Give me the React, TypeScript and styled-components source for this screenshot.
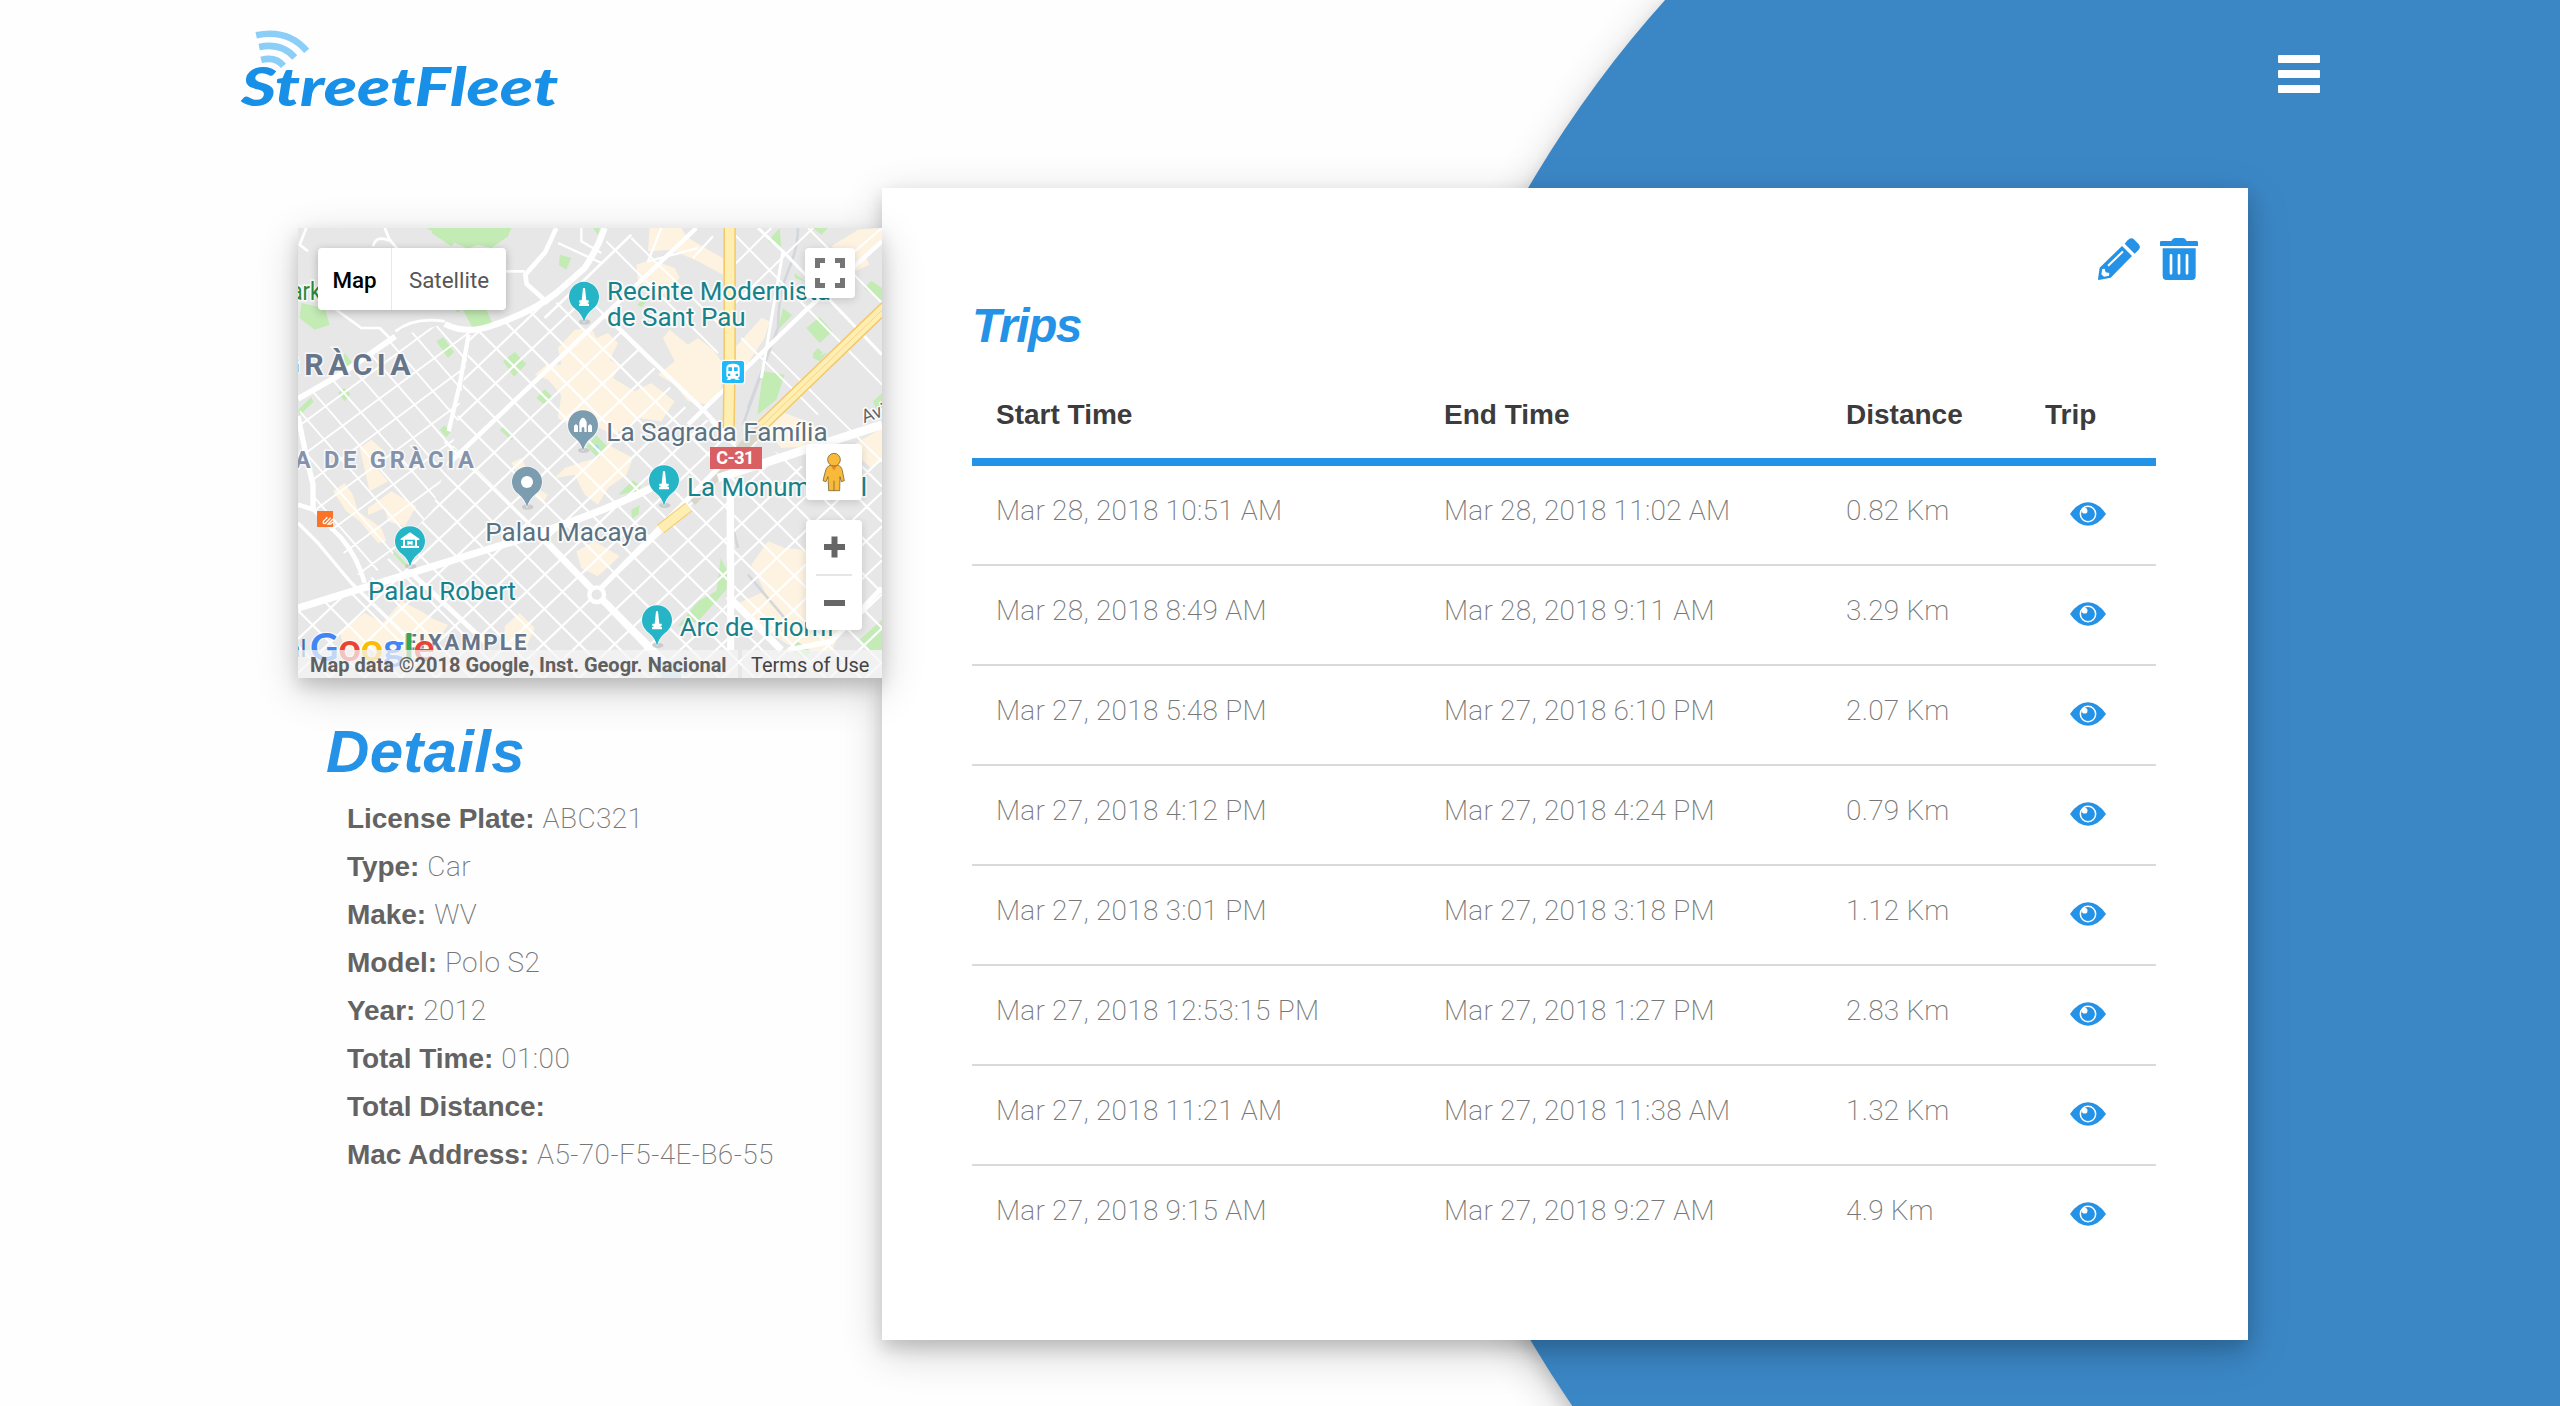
import React from 'react';
import styled, { createGlobalStyle } from 'styled-components';

const blue = '#2492e6';
const sans = '"Liberation Sans", Arial, sans-serif';
const thin = 'Roboto, "Liberation Sans", sans-serif';

const GlobalStyle = createGlobalStyle`
  * { box-sizing: border-box; }
  body { margin: 0; background: #fff; font-family: ${sans}; }
`;

const Page = styled.div`
  position: relative;
  height: 1406px;
  overflow: hidden;
  background: #fefefe;
`;

const Disc = styled.div`
  position: absolute;
  left: 1373px;
  top: -378px;
  width: 2280px;
  height: 2280px;
  border-radius: 50%;
  background: #3b87c6;
  box-shadow: 0 8px 16px rgba(0, 0, 0, 0.12), 0 12px 40px rgba(0, 0, 0, 0.19);
`;

const Header = styled.header`
  position: relative;
  display: flex;
  justify-content: space-between;
  align-items: flex-start;
  height: 188px;
  padding: 20px 240px 0 236px;
`;

const LogoArt = styled.svg`
  width: 330px;
  height: 93px;
`;

const MenuButton = styled.button`
  display: flex;
  flex-direction: column;
  gap: 7px;
  margin: 35px 0 0;
  padding: 0;
  border: 0;
  background: none;
`;

const MenuBar = styled.span`
  width: 42px;
  height: 8px;
  border-radius: 1px;
  background: #fff;
`;

const Main = styled.main`
  position: relative;
  display: flex;
  padding-left: 298px;
`;

const Side = styled.section`
  width: 584px;
  padding-top: 40px;
`;

const MapFrame = styled.div`
  position: relative;
  width: 584px;
  height: 450px;
  box-shadow: 0 8px 16px rgba(0, 0, 0, 0.15), 0 12px 40px rgba(0, 0, 0, 0.19);
`;

const MapArt = styled.svg`
  display: block;
  width: 584px;
  height: 450px;
`;

const MapOverlay = styled.div`
  position: absolute;
  inset: 0;
  display: flex;
  flex-direction: column;
  justify-content: space-between;
`;

const MapControls = styled.div`
  display: flex;
  justify-content: space-between;
  align-items: flex-start;
  padding: 20px 20px 0;
`;

const TypeSwitch = styled.div`
  display: flex;
  height: 62px;
  border-radius: 4px;
  background: #fff;
  box-shadow: 0 2px 8px rgba(0, 0, 0, 0.25);
`;

const TypeOption = styled.button<{ $active?: boolean }>`
  width: ${p => (p.$active ? 73 : 115)}px;
  padding: 2px 0 0;
  border: 0;
  border-left: ${p => (p.$active ? 'none' : '1px solid #e8e8e8')};
  background: none;
  font: ${p => (p.$active ? 500 : 400)} 22.400px Roboto, sans-serif;
  color: ${p => (p.$active ? '#000' : '#565656')};
`;

const ControlColumn = styled.div`
  display: flex;
  flex-direction: column;
  align-items: center;
`;

const ControlBox = styled.button<{ $w: number; $h: number; $top?: number; $left?: number }>`
  display: flex;
  align-items: center;
  justify-content: center;
  width: ${p => p.$w}px;
  height: ${p => p.$h}px;
  margin: ${p => p.$top || 0}px 0 0 ${p => p.$left || 0}px;
  padding: 0;
  border: 0;
  border-radius: 4px;
  background: #fff;
  box-shadow: 0 2px 8px rgba(0, 0, 0, 0.15);
`;

const Attribution = styled.div`
  display: flex;
  gap: 4px;
  height: 28px;
  font: 400 20px/30px Roboto, sans-serif;
  color: #444;
`;

const Credit = styled.span<{ $w: number; $bold?: boolean }>`
  width: ${p => p.$w}px;
  padding-left: ${p => (p.$bold ? 12 : 9)}px;
  background: rgba(245, 245, 245, 0.72);
  font-weight: ${p => (p.$bold ? 700 : 400)};
  color: ${p => (p.$bold ? '#606060' : '#444')};
  white-space: nowrap;
`;

const DetailsTitle = styled.h1`
  margin: 42px 0 0 28px;
  font: italic 700 60px/64px ${sans};
  letter-spacing: 0.3px;
  color: ${blue};
`;

const DetailList = styled.dl`
  margin: 11px 0 0 49px;
`;

const DetailRow = styled.div`
  display: flex;
  gap: 8px;
  height: 48px;
  font-size: 28px;
  line-height: 48px;
`;

const Label = styled.dt`
  font-weight: 700;
  letter-spacing: -0.05px;
  color: #636363;
`;

const Value = styled.dd`
  margin: 0;
  font-family: ${thin};
  font-weight: 200;
  letter-spacing: 0.4px;
  color: #777;
`;

const Card = styled.section`
  width: 1366px;
  height: 1152px;
  background: #fff;
  box-shadow: 0 8px 16px rgba(0, 0, 0, 0.15), 0 12px 40px rgba(0, 0, 0, 0.19);
`;

const Actions = styled.div`
  display: flex;
  justify-content: flex-end;
  gap: 20px;
  padding: 50px 50px 0 0;
`;

const CardTitle = styled.h2`
  margin: 18px 0 0 90px;
  font: italic 700 48px/56px ${sans};
  letter-spacing: -1.500px;
  color: ${blue};
`;

const Table = styled.div`
  width: 1184px;
  margin: 16px 0 0 90px;
`;

const Row = styled.div<{ $head?: boolean; $last?: boolean }>`
  display: grid;
  grid-template-columns: 448px 402px 199px 86px;
  padding-left: 24px;
  height: ${p => (p.$head ? 96 : 100)}px;
  border-bottom: ${p => (p.$head ? `8px solid ${blue}` : p.$last ? 'none' : '2px solid #dadada')};
`;

const HeadCell = styled.div`
  padding-top: 29px;
  font: 700 28px/32px ${sans};
  color: #3c3c3c;
`;

const Cell = styled.div`
  padding-top: 29px;
  font: 200 28px/32px ${thin};
  letter-spacing: 0.25px;
  color: #777;
`;

const EyeCell = styled.div`
  padding: 36px 0 0 25px;
`;

const Logo = () => (
  <LogoArt viewBox="108 60 990 280" aria-label="StreetFleet">
    <g fill="none" stroke="#8bcef8" strokeWidth="20">
      <path d="M167 106 Q262 86 319 153" />
      <path d="M176 141 Q244 128 283 173" />
      <path d="M182 180 Q226 169 249 198" />
    </g>
    <text x="121" y="320" fontFamily="Lato, sans-serif" fontWeight="900" fontStyle="italic" fontSize="163"
      textLength="955" lengthAdjust="spacingAndGlyphs" fill="#1890e8">StreetFleet</text>
  </LogoArt>
);

const Eye = () => (
  <svg width="36" height="24" viewBox="0 0 108 72">
    <path d="M0 36 Q24 1 54 1 Q84 1 108 36 Q84 71 54 71 Q24 71 0 36Z" fill={blue} />
    <circle cx="54" cy="36" r="23" fill="none" stroke="#fff" strokeWidth="4.500" />
    <circle cx="44" cy="26" r="8.500" fill="#fff" />
  </svg>
);

const Pencil = () => (
  <svg width="42" height="42" viewBox="0 0 126 126">
    <path d="M5 89 L72 24 L102 54 L38 119 L2 126 L0 124 Z" fill={blue} />
    <path d="M80 17 L89 7 Q99 -4 109 5 L121 17 Q130 27 122 35 L110 47 Z" fill={blue} />
    <path d="M32 82 L73 42" stroke="#fff" strokeWidth="6" strokeLinecap="round" />
    <path d="M13 93 L20 92 L23 103 L34 105 L33 113 L18 116 L10 109 Z" fill="#fff" />
  </svg>
);

const Trash = () => (
  <svg width="38" height="42" viewBox="0 0 114 126">
    <path d="M4 9 H34 Q38 0 45 0 H69 Q76 0 80 9 H110 Q114 9 114 13 V24 H0 V13 Q0 9 4 9Z" fill={blue} />
    <path d="M8 31 H107 V114 Q107 126 95 126 H20 Q8 126 8 114Z" fill={blue} />
    <path d="M33 52 V106 M57 52 V106 M81 52 V106" stroke="#fff" strokeWidth="8" strokeLinecap="round" />
  </svg>
);

/* Street map, drawn at three units per pixel. */
const range = (from: number, to: number, step: number) =>
  Array.from({ length: Math.ceil((to - from) / step) }, (_, i) => from + i * step);

const gridDown = range(-1720, 1400, 106.2).map(c => `M0 ${c}L1752 ${c + 1752}`).join('');
const gridUp = range(111, 3100, 102).map(c => `M0 ${c}L1752 ${c - 1664}`).join('');
const oldDown = range(-600, 1100, 104).map(c => `M0 ${c}L800 ${c + 920}`).join('');
const oldUp = range(500, 1800, 96).map(c => `M0 ${c}L800 ${c - 590}`).join('');

const parks = [
  '385,0 640,0 630,25 580,60 540,50 510,62 450,35', '410,0 470,45 460,55 400,15',
  '10,225 80,240 95,290 50,305 5,270', '495,246 565,246 585,290 525,302',
  '785,80 820,90 805,125 783,112', '415,340 435,328 468,372 450,390',
  '615,400 650,372 685,408 648,446', '715,510 740,483 765,508 740,530',
  '605,605 620,595 650,625 640,637', '120,495 138,480 158,497 140,520',
  '0,545 40,508 46,522 5,562', '425,605 440,592 458,612 445,627',
  '865,655 895,622 930,658 900,690', '960,800 1005,757 1030,775 1020,790',
  '1000,845 1025,832 1022,858 1002,872', '1410,40 1445,0 1450,62',
  '1395,430 1460,440 1435,515 1378,560', '1525,300 1565,267 1603,310 1565,345',
  '1455,240 1482,262 1440,305', '1698,180 1720,158 1752,180 1752,218',
  '1490,135 1520,160 1490,150', '1545,0 1590,0 1570,20', '1725,520 1752,495 1752,540 1735,545',
  '1545,375 1560,360 1575,375 1562,385 1590,372 1565,400 1545,390',
  '1140,1195 1200,1120 1255,1090 1268,990 1288,1030 1285,1085 1200,1180',
  '1465,1262 1495,1238 1540,1270 1520,1290', '1680,1240 1752,1175 1752,1266 1715,1266',
  '275,965 290,970 330,1012 318,1012', '105,890 128,918 118,925 100,900', '885,0 905,0 900,20',
  '468,215 492,240 480,255 462,235', '140,375 160,400 155,420 135,400', '1018,230 1035,212 1045,222 1030,238',
];

const zones = [
  '780,360 830,305 880,300 895,330 930,315 960,345 935,395 965,415 945,450 1010,490 1060,465 1130,520 1090,580 1020,570 950,620 880,590 830,600 780,570 790,500 750,455 710,440 745,410 790,410',
  '1095,330 1115,305 1170,350 1200,330 1245,365 1270,400 1270,480 1230,530 1170,520 1130,470 1080,440 1130,400',
  '1055,0 1150,0 1165,25 1220,60 1275,90 1275,140 1200,100 1120,65 1050,70',
  '1015,110 1060,95 1130,120 1145,150 1095,200 1020,160', '1310,360 1390,270 1415,280 1400,330 1340,420 1315,400',
  '860,700 900,690 930,650 1005,690 985,740 930,780 900,830 860,800 830,740 770,750 800,720',
  '105,790 140,765 165,800 180,850 250,900 265,940 240,945 185,880 145,850',
  '210,840 280,790 355,835 320,895 270,880 260,840 210,862', '185,660 220,635 265,675 220,700 270,760 215,790',
  '640,705 670,690 715,780 750,800 735,825 690,790', '835,970 890,940 965,985 900,1045 850,1020',
  '1360,1010 1410,940 1460,960 1560,970 1560,1150 1640,1180 1600,1270 1500,1270 1440,1230 1310,1130 1400,1090',
  '125,1210 200,1155 255,1185 310,1120 370,1150 410,1175 450,1190 400,1266 140,1266',
  '620,1195 665,1155 710,1200 680,1266 620,1266', '1600,55 1680,5 1752,0 1752,35 1700,80 1715,110 1670,130 1640,90',
  '1420,540 1540,585 1600,650 1450,660 1400,600', '1650,660 1752,600 1752,700 1720,720',
];

const arteries: [string, number][] = [
  ['M700 895L1120 1330', 20], ['M440 640L700 895', 8], ['M925 265L1225 555L1310 650', 13],
  ['M460 700L1195 0', 13], ['M890 1100L1290 690', 16], ['M1170 590L1520 250L1752 40', 13],
  ['M0 1140L680 930Q920 850 1060 780', 22], ['M1260 750L1752 590', 26],
  ['M1298 780V1266', 21], ['M1290 1105L1450 1266', 21], ['M1470 1266L1600 1240L1752 1080', 16],
  ['M775 0L742 72L682 140L686 168L750 225', 14], ['M440 288Q510 322 590 290Q710 248 775 195L860 120Q900 60 920 0', 19],
  ['M512 320L485 470L452 610', 13], ['M0 512L130 438L292 325', 17], ['M292 310Q350 265 440 280', 8],
  ['M0 565Q25 690 45 770L45 845', 16], ['M0 830L48 845L130 930Q180 990 200 1065', 14],
  ['M0 885L60 945L160 1065L330 1230', 10], ['M340 1035L560 1240', 15], ['M80 220L190 300H245L275 330', 8],
  ['M260 0L275 35L300 65M225 55Q235 20 275 38', 8], ['M25 0L5 50L30 70', 8], ['M620 130H680', 8],
  ['M850 0V40L910 75M780 45L910 105', 7], ['M1185 90L1245 25M1090 0L1050 100L1200 60', 7],
  ['M1380 0L1455 70L1390 450M1455 70L1752 380', 9], ['M1290 780V1000', 8], ['M740 270L1000 20', 8],
  ['M1310 20L1752 470M1530 0L1752 225M1330 330L1560 560M1312 225L1545 0M1310 110L1420 0M1600 130L1752 0M1420 370L1600 550L1752 700', 6],
  ['M925 40L1260 375M1000 30L1275 300', 6],
];

interface PinProps { x: number; y: number; color?: string; kind: 'tower' | 'dot' | 'church' | 'museum' }
const Pin = ({ x, y, color = '#25b5c6', kind }: PinProps) => (
  <g transform={`translate(${x} ${y})`}>
    <ellipse cx="2" cy="75" rx="17" ry="8" fill="#999" opacity=".35" />
    <path d="M0 76 Q-5 53 -25 37 A45 45 0 1 1 25 37 Q5 53 0 76Z" fill={color} stroke="#fff" strokeOpacity=".8" strokeWidth="4" paintOrder="stroke" />
    {kind === 'dot' && <circle r="18" fill="#fff" />}
    {kind === 'tower' && <path d="M-3 -27H3L7 10H14V17H9L15 21V27H-15V21L-9 17H-14V10H-7Z" fill="#fff" />}
    {kind === 'church' && <path d="M-27 20V2Q-21 -8 -15 2V20ZM-11 20V-10Q0 -36 11 -10V20H4V8Q0 2 -4 8V20ZM15 20V2Q21 -8 27 2V20Z" fill="#fff" />}
    {kind === 'museum' && <path d="M-28 -8L0 -27L28 -8V-4H21V14H27V20H-27V14H-21V-4H-28ZM-15 -5V13H15V-5ZM-8 -1H-3L0 2L3 -1H8V10H3L0 7L-3 10H-8Z" fill="#fff" fillRule="evenodd" />}
  </g>
);

interface PlaceProps { x: number; y: number; w: number; color?: string; children: string }
const Place = ({ x, y, w, color = '#5b7282', children }: PlaceProps) => (
  <text x={x - 3} y={y} textLength={w + 4} lengthAdjust="spacingAndGlyphs" fontSize="77" fill={color}
    stroke="#fff" strokeOpacity=".75" strokeWidth="11" strokeLinejoin="round" paintOrder="stroke">{children}</text>
);

const teal = '#17828b';

const StreetMap = () => (
  <MapArt viewBox="0 0 1752 1350">
    <defs>
      <clipPath id="new-town">
        <path d="M520 315L700 245L860 200L1000 330L1180 560L1300 600L1560 740L1752 690V1350H0V1140L200 1070L400 850L465 650Z" />
      </clipPath>
      <clipPath id="old-town">
        <path d="M0 515L300 325L440 288L520 315L465 650L400 850L200 1070L140 980L50 830Z" />
      </clipPath>
    </defs>
    <rect width="1752" height="1350" fill="#e7e7e7" />
    {zones.map(p => <polygon key={p} points={p} fill="#fdf3e0" />)}
    {parks.map(p => <polygon key={p} points={p} fill="#c3ebb4" />)}
    <circle cx="895" cy="658" r="8" fill="#a5d5f7" />
    <g fill="none" stroke="#d3d7db" strokeWidth="8">
      <path d="M1500 0Q1500 60 1470 130T1440 300L1350 540M1385 450L1335 590M1305 780V900L1320 960M1350 1040L1460 1170" />
    </g>
    <g fill="none" stroke="#fff" strokeWidth="6.500">
      <path d={gridDown + gridUp} clipPath="url(#new-town)" />
      <path d={oldDown + oldUp} clipPath="url(#old-town)" strokeWidth="5.500" />
    </g>
    <path d="M465 660L690 885" stroke="#c9e4bf" strokeWidth="4" />
    <path d="M1390 600L1180 820" stroke="#d9d5cb" strokeWidth="32" />
    <g fill="none" stroke="#fff" strokeLinejoin="round">
      {arteries.map(([d, w]) => <path key={d} d={d} strokeWidth={w} />)}
      <circle cx="896" cy="1100" r="22" strokeWidth="13" fill="#e7e7e7" />
    </g>
    <g fill="none">
      <path d="M1295 0V400L1292 600M1770 229L1390 595" stroke="#f4c96a" strokeWidth="37" />
      <path d="M1295 0V400L1292 600M1770 229L1390 595" stroke="#feeeb2" strokeWidth="28" />
      <path d="M1770 229L1390 595" stroke="#f4c96a" strokeWidth="2" />
      <path d="M1088 903L1172 837" stroke="#f4c96a" strokeWidth="33" />
      <path d="M1088 903L1172 837" stroke="#feeeb2" strokeWidth="27" />
    </g>
    <rect x="1090" y="1300" width="60" height="50" fill="#aadbe5" />

    <g fontFamily="Roboto, sans-serif">
      <Place x={-60} y={215} w={128} color="#2c8a3a">Park</Place>
      <g fontWeight="700" stroke="#fff" strokeOpacity=".7" strokeWidth="9" paintOrder="stroke">
        <text x="-56" y="440" textLength="394" fontSize="91" fill="#66758a">GRÀCIA</text>
        <text x="-10" y="720" textLength="538" fontSize="71" fill="#8493ab">A DE GRÀCIA</text>
        <text x="318" y="1267" textLength="368" fontSize="67" fill="#66758a">EIXAMPLE</text>
      </g>
      <Place x={930} y={216} w={668} color={teal}>Recinte Modernista</Place>
      <Place x={930} y={293} w={412} color={teal}>de Sant Pau</Place>
      <Place x={928} y={640} w={660}>La Sagrada Família</Place>
      <Place x={1170} y={804} w={536} color={teal}>La Monumental</Place>
      <Place x={565} y={938} w={483}>Palau Macaya</Place>
      <Place x={213} y={1115} w={440} color={teal}>Palau Robert</Place>
      <Place x={1148} y={1223} w={463} color={teal}>Arc de Triomf</Place>
      <g transform="rotate(-20 1698 586)">
        <text x="1698" y="586" fontSize="56" fill="#666" stroke="#fff" strokeWidth="8" paintOrder="stroke">Avi</text>
      </g>
      <text x="-32" y="1288" fontSize="72" fill="#3b6fb5">al</text>
      <rect x="1236" y="657" width="156" height="66" fill="#d95f62" />
      <text x="1255" y="709" textLength="114" fontSize="54" fontWeight="700" fill="#fff">C-31</text>
    </g>

    <rect x="1270" y="397" width="70" height="70" rx="8" fill="#1fb9f8" stroke="#fff" strokeWidth="4" />
    <path d="M1285 420Q1285 407 1305 407T1325 420V443Q1325 449 1319 449L1325 456H1285L1291 449Q1285 449 1285 443Z" fill="#fff" />
    <path d="M1291 418H1302V429H1291ZM1308 418H1319V429H1308ZM1290 437H1297V444H1290ZM1313 437H1320V444H1313ZM1298 452H1312V456H1298Z" fill="#1fb9f8" />
    <rect x="57" y="849" width="48" height="48" fill="#fb7327" />
    <path d="M88 868L76 880Q74 888 82 886L98 869M105 873L90 888H98L105 882" fill="none" stroke="#fff" strokeWidth="4" />

    <Pin x={858} y={207} kind="tower" />
    <Pin x={855} y={592} kind="church" color="#7c9db0" />
    <Pin x={687} y={762} kind="dot" color="#7c9db0" />
    <Pin x={1098} y={757} kind="tower" />
    <Pin x={1077} y={1177} kind="tower" />
    <Pin x={336} y={940} kind="museum" />

    <text x="36" y="1299" textLength="374" lengthAdjust="spacingAndGlyphs" fontFamily="Lato, sans-serif" fontWeight="700" fontSize="115"
      stroke="#fff" strokeOpacity=".6" strokeWidth="8" paintOrder="stroke">
      <tspan fill="#4285f4">G</tspan><tspan fill="#ea4335">o</tspan><tspan fill="#fbbc05">o</tspan>
      <tspan fill="#4285f4">g</tspan><tspan fill="#34a853">l</tspan><tspan fill="#ea4335">e</tspan>
    </text>
  </MapArt>
);

const MapPanel = () => (
  <MapFrame>
    <StreetMap />
    <MapOverlay>
      <MapControls>
        <TypeSwitch>
          <TypeOption $active>Map</TypeOption>
          <TypeOption>Satellite</TypeOption>
        </TypeSwitch>
        <ControlColumn>
          <ControlBox $w={50} $h={50}>
            <svg width="32" height="32" viewBox="0 0 32 32" fill="none" stroke="#757575" strokeWidth="5">
              <path d="M3.500 11V3.500H11M21 3.500H28.500V11M28.500 21V28.500H21M11 28.500H3.500V21" />
            </svg>
          </ControlBox>
          <ControlBox $w={56} $h={56} $top={146} $left={8}>
            <svg width="24" height="40" viewBox="0 0 72 120" stroke="#7b6a35" strokeWidth="2.500">
              <path d="M20 42Q24 38 36 38T52 42Q60 44 63 66L67 86L58 89L54 74L53 116H20L18 74L12 89L3 86L9 62Q12 46 20 42Z" fill="#f9b93b" />
              <path d="M36 86V116" />
              <path d="M26 40H46L36 56Z" fill="#e98a2a" stroke="none" />
              <circle cx="36" cy="23" r="19" fill="#f9b93b" />
            </svg>
          </ControlBox>
          <ControlBox $w={56} $h={110} $top={20} $left={8}>
            <svg width="56" height="110" viewBox="0 0 56 110">
              <path d="M18 27H39M28.500 16.500V37.500M18 83H39" stroke="#666" strokeWidth="6" />
              <path d="M10 55H46" stroke="#e6e6e6" strokeWidth="2" />
            </svg>
          </ControlBox>
        </ControlColumn>
      </MapControls>
      <Attribution>
        <Credit $w={440} $bold>Map data ©2018 Google, Inst. Geogr. Nacional</Credit>
        <Credit $w={140}>Terms of Use</Credit>
      </Attribution>
    </MapOverlay>
  </MapFrame>
);

const details = [
  ['License Plate:', 'ABC321'], ['Type:', 'Car'], ['Make:', 'WV'], ['Model:', 'Polo S2'],
  ['Year:', '2012'], ['Total Time:', '01:00'], ['Total Distance:', ''], ['Mac Address:', 'A5-70-F5-4E-B6-55'],
];

const trips = [
  ['Mar 28, 2018 10:51 AM', 'Mar 28, 2018 11:02 AM', '0.82 Km'],
  ['Mar 28, 2018 8:49 AM', 'Mar 28, 2018 9:11 AM', '3.29 Km'],
  ['Mar 27, 2018 5:48 PM', 'Mar 27, 2018 6:10 PM', '2.07 Km'],
  ['Mar 27, 2018 4:12 PM', 'Mar 27, 2018 4:24 PM', '0.79 Km'],
  ['Mar 27, 2018 3:01 PM', 'Mar 27, 2018 3:18 PM', '1.12 Km'],
  ['Mar 27, 2018 12:53:15 PM', 'Mar 27, 2018 1:27 PM', '2.83 Km'],
  ['Mar 27, 2018 11:21 AM', 'Mar 27, 2018 11:38 AM', '1.32 Km'],
  ['Mar 27, 2018 9:15 AM', 'Mar 27, 2018 9:27 AM', '4.9 Km'],
];

export default function App() {
  return (
    <Page>
      <GlobalStyle />
      <Disc />
      <Header>
        <Logo />
        <MenuButton aria-label="Menu"><MenuBar /><MenuBar /><MenuBar /></MenuButton>
      </Header>
      <Main>
        <Side>
          <MapPanel />
          <DetailsTitle>Details</DetailsTitle>
          <DetailList>
            {details.map(([label, value]) => (
              <DetailRow key={label}><Label>{label}</Label><Value>{value}</Value></DetailRow>
            ))}
          </DetailList>
        </Side>
        <Card>
          <Actions><Pencil /><Trash /></Actions>
          <CardTitle>Trips</CardTitle>
          <Table>
            <Row $head>
              {['Start Time', 'End Time', 'Distance', 'Trip'].map(h => <HeadCell key={h}>{h}</HeadCell>)}
            </Row>
            {trips.map(([start, end, km], i) => (
              <Row key={start} $last={i === trips.length - 1}>
                <Cell>{start}</Cell><Cell>{end}</Cell><Cell>{km}</Cell>
                <EyeCell><Eye /></EyeCell>
              </Row>
            ))}
          </Table>
        </Card>
      </Main>
    </Page>
  );
}
